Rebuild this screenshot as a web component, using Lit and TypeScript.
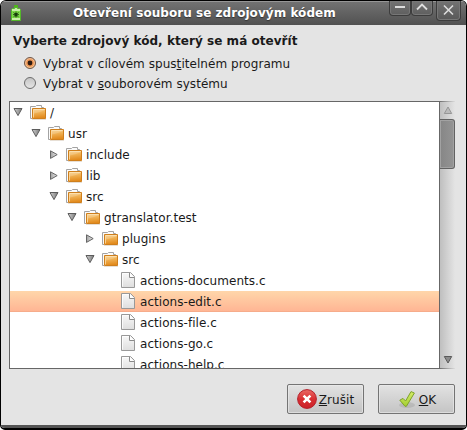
import { LitElement, html, css, svg, nothing } from "lit";
import { customElement, property, state } from "lit/decorators.js";
import { classMap } from "lit/directives/class-map.js";
import { styleMap } from "lit/directives/style-map.js";

type Kind = "open" | "closed" | "file";
interface Row {
  name: string;
  level: number;
  kind: Kind;
}

const ROWS: Row[] = [
  { name: "/", level: 0, kind: "open" },
  { name: "usr", level: 1, kind: "open" },
  { name: "include", level: 2, kind: "closed" },
  { name: "lib", level: 2, kind: "closed" },
  { name: "src", level: 2, kind: "open" },
  { name: "gtranslator.test", level: 3, kind: "open" },
  { name: "plugins", level: 4, kind: "closed" },
  { name: "src", level: 4, kind: "open" },
  { name: "actions-documents.c", level: 5, kind: "file" },
  { name: "actions-edit.c", level: 5, kind: "file" },
  { name: "actions-file.c", level: 5, kind: "file" },
  { name: "actions-go.c", level: 5, kind: "file" },
  { name: "actions-help.c", level: 5, kind: "file" },
];

const arrowDown = html`<svg width="12" height="12" viewBox="0 0 12 12">
  <defs><linearGradient id="d" x1="0" x2="1"><stop offset="0" stop-color="#d2d2d2" /><stop offset="1" stop-color="#777" /></linearGradient></defs>
  <path d="M2 2.5H10L6 9.6Z" fill="url(#d)" stroke="#5c5c5c" />
</svg>`;

const arrowRight = html`<svg width="12" height="12" viewBox="0 0 12 12">
  <defs><linearGradient id="r" x1="0" x2="1"><stop offset="0" stop-color="#a2a2a2" /><stop offset="1" stop-color="#eee" /></linearGradient></defs>
  <path d="M2.5 1.8V9.4L9.2 5.6Z" fill="url(#r)" stroke="#666" />
</svg>`;

const folderIcon = html`<svg width="16" height="16" viewBox="0 0 16 16">
  <defs><linearGradient id="f" x1="0" y1="0" x2="0.15" y2="1"><stop offset="0" stop-color="#f9cf86" /><stop offset="0.45" stop-color="#f0b255" /><stop offset="1" stop-color="#e28a1c" /></linearGradient></defs>
  <path d="M0.5 13.5V1.5H5.5L6.5 0.5H11.5V2.5H13.5V5" fill="#fbfbfb" stroke="#a3a3a3" />
  <path d="M0.5 13.5H2" stroke="#a3a3a3" />
  <path d="M2.5 3.5H15.5V13.5H2.5Z" fill="url(#f)" stroke="#cf7f1c" />
  <path d="M3.5 12.5V4.5H14.5" fill="none" stroke="#fbdca4" stroke-opacity="0.85" />
  <path d="M4 8.4Q9 8 15 5V4H4Z" fill="#fff" fill-opacity="0.18" />
  <path d="M2 14.5H16" stroke="#b9a488" stroke-opacity="0.35" />
</svg>`;

const fileIcon = html`<svg width="16" height="16" viewBox="0 0 16 16">
  <defs><linearGradient id="p" x1="0" y1="0" x2="0" y2="1"><stop offset="0" stop-color="#f8f8f8" /><stop offset="1" stop-color="#dedede" /></linearGradient></defs>
  <path d="M1.5 0.5H10.5L14.5 4.5V15.5H1.5Z" fill="url(#p)" stroke="#999" />
  <path d="M2.5 14.5V1.5H9" fill="none" stroke="#fff" stroke-opacity="0.8" />
  <path d="M9.5 1V5.5H14" fill="#fff" stroke="#8a8a8a" />
</svg>`;

@customElement("radio-option")
class RadioOption extends LitElement {
  static styles = css`
    :host { display: flex; align-items: center; height: 20px; gap: 7px; }
    svg { display: block; flex: none; }
    .text { line-height: 18px; padding-top: 2px; }
  `;
  @property({ type: Boolean }) checked = false;
  render() {
    return html`<svg width="12" height="12" viewBox="0 0 12 12">
        <defs>
          <linearGradient id="g" x1="0" y1="0" x2="0" y2="1">
            <stop offset="0" stop-color=${this.checked ? "#f7b889" : "#c4c4c4"} />
            <stop offset="1" stop-color=${this.checked ? "#fbc48c" : "#e6e6e6"} />
          </linearGradient>
        </defs>
        <circle cx="6" cy="6" r="5.5" fill="url(#g)" stroke=${this.checked ? "#6b5548" : "#6c6c6c"} />
        ${this.checked
          ? svg`<circle cx="6" cy="6" r="3.8" fill="#e99353"/><circle cx="6" cy="6" r="2.4" fill="#2e1a10"/>`
          : nothing}
      </svg>
      <span class="text"><slot></slot></span>`;
  }
}

@customElement("tree-row")
class TreeRow extends LitElement {
  static styles = css`
    :host { display: block; }
    .row { display: flex; align-items: flex-start; height: 21px; white-space: nowrap; }
    .selected { background: linear-gradient(#ffd6aa, #ffb493); box-shadow: inset 0 -1px #f6ac8b; }
    .arrow { width: 12px; height: 12px; margin: 4px 6px 0 2px; flex: none; }
    .closed .arrow { margin-top: 5px; }
    .icon { width: 16px; height: 16px; margin: 3px 4px 0 0; flex: none; }
    .file .icon { margin-top: 2px; }
    svg { display: block; }
    .label { line-height: 22px; height: 21px; }
  `;
  @property({ attribute: false }) row!: Row;
  @property({ type: Boolean }) selected = false;
  render() {
    const { name, level, kind } = this.row;
    return html`<div
      class=${classMap({ row: true, [kind]: true, selected: this.selected })}
      style=${styleMap({ paddingLeft: `${level * 18}px` })}
    >
      <span class="arrow">${kind === "open" ? arrowDown : kind === "closed" ? arrowRight : nothing}</span>
      <span class="icon">${kind === "file" ? fileIcon : folderIcon}</span>
      <span class="label">${name}</span>
    </div>`;
  }
}

@customElement("app-root")
class AppRoot extends LitElement {
  static styles = css`
    :host { display: block; width: 467px; height: 430px; background: #fff; font: 12px "DejaVu Sans", sans-serif; letter-spacing: 0.045px; color: #1a1a1a; }
    * { box-sizing: border-box; }
    svg { display: block; }
    .window { display: flex; flex-direction: column; width: 467px; height: 430px; border: 1px solid #000; border-bottom-width: 2px; border-radius: 6px 6px 5px 5px; background: #e4e4e4; overflow: hidden; }
    .title { display: flex; height: 24px; flex: none; background: linear-gradient(#737373, #515151); box-shadow: inset 0 1px #969696; color: #fff; }
    .app { width: 30px; padding: 4px 0 0 10px; }
    .caption { flex: 1; padding-left: 42px; font-weight: bold; line-height: 24px; white-space: nowrap; text-shadow: 0 1px 1px #333; }
    .controls { display: flex; margin-right: 5px; }
    .control { width: 22px; height: 15px; border: 1px solid #3c3c3c; border-top: 0; border-radius: 0 0 4px 4px; box-shadow: inset 0 0 0 1px #777; }
    .close { width: 25px; height: 20px; margin-left: 3px; }
    .body { flex: 1; display: flex; flex-direction: column; padding: 7px 11px 0 8px; }
    .heading { font-weight: bold; line-height: 18px; height: 21px; padding-left: 4px; white-space: nowrap; }
    .options { padding-left: 15px; height: 48px; white-space: nowrap; }
    .pane { display: flex; height: 268px; flex: none; }
    .tree { width: 431px; border: 1px solid #676767; background: #fff; overflow: hidden; }
    .scroll { width: 15px; display: flex; flex-direction: column; justify-content: space-between; background: linear-gradient(90deg, #bfbfbf, #e4e4e4); border: solid #aaa; border-width: 1px 0; border-image: linear-gradient(90deg, #676767, #e4e4e4) 1; }
    .step { height: 17px; padding: 4px 0 0 2px; }
    .thumb { height: 50px; border: 1px solid #626262; border-left: 0; border-radius: 0 3px 3px 0; background: linear-gradient(90deg, #868686, #949494); box-shadow: inset 0 0 0 1px #a2a2a2; }
    .track { flex: 1; }
    .actions { display: flex; justify-content: flex-end; gap: 14px; margin-top: 15px; }
    .button { display: flex; align-items: center; justify-content: center; gap: 2px; width: 77px; height: 30px; border: 1px solid #747474; border-radius: 2px; background: linear-gradient(#e2e2e2, #c4c4c4); box-shadow: inset 0 0 0 1px #ececec99; }
    .button span { line-height: 18px; padding-top: 2px; }
    .frame { height: 3px; flex: none; background: #545454; }
    u { text-decoration: underline 1px; text-underline-offset: 1px; text-decoration-skip-ink: none; }
  `;
  @state() private selectedIndex = 9;
  render() {
    return html`<div class="window">
      <div class="title">
        <div class="app">
          <svg width="10" height="17" viewBox="0 0 10 17">
            <rect x="3" y="0" width="4" height="2" rx="0.6" fill="#4cba16" />
            <path d="M3.5 2.5H6.5V3.5H8.5L9.5 4.5V15.5H0.5V4.5L1.5 3.5H3.5Z" fill="#c8f0a8" stroke="#55b82a" />
            <rect x="1" y="6" width="8" height="7" fill="#7ddb48" />
            <path d="M5 6.5V12.5M2.5 7.5L7.5 11.8M7.5 7.5L2.5 11.8M2 9.6H8" stroke="#1f4a10" stroke-width="0.9" />
            <rect x="3.9" y="8" width="2.2" height="3.4" fill="#173d0c" />
          </svg>
        </div>
        <div class="caption">Otevření souboru se zdrojovým kódem</div>
        <div class="controls">
          <div class="control"><svg width="20" height="14" viewBox="0 0 20 14"><path d="M5 6H15" stroke="#ddd" stroke-width="2" /></svg></div>
          <div class="control"><svg width="20" height="14" viewBox="0 0 20 14"><path d="M5 8.5L10 3.5L15 8.5" fill="none" stroke="#ddd" stroke-width="1.8" /></svg></div>
          <div class="control close"><svg width="23" height="19" viewBox="0 0 23 19"><path d="M7 4.5L16 13.5M16 4.5L7 13.5" stroke="#ddd" stroke-width="1.6" /></svg></div>
        </div>
      </div>
      <div class="body">
        <div class="heading">Vyberte zdrojový kód, který se má otevřít</div>
        <div class="options">
          <radio-option checked>Vybrat v cílovém spus<u>t</u>itelném programu</radio-option>
          <radio-option>Vybrat v <u>s</u>ouborovém systému</radio-option>
        </div>
        <div class="pane">
          <div class="tree">
            ${ROWS.map((row, i) => html`<tree-row .row=${row} ?selected=${i === this.selectedIndex} @click=${() => (this.selectedIndex = i)}></tree-row>`)}
          </div>
          <div class="scroll">
            <div class="step"><svg width="12" height="10" viewBox="0 0 12 10"><path d="M2.3 7.5H9.7L6 1Z" fill="#bbb" stroke="#969696" /></svg></div>
            <div class="thumb"></div>
            <div class="track"></div>
            <div class="step"><svg width="12" height="10" viewBox="0 0 12 10"><path d="M2.3 1.5H9.7L6 8Z" fill="#8b8b8b" stroke="#595959" /></svg></div>
          </div>
        </div>
        <div class="actions">
          <div class="button">
            <svg width="20" height="20" viewBox="0 0 20 20">
              <defs><linearGradient id="c" x1="0" y1="0" x2="0" y2="1"><stop offset="0" stop-color="#ea6a66" /><stop offset="0.5" stop-color="#d92f32" /><stop offset="1" stop-color="#cb2229" /></linearGradient></defs>
              <circle cx="10" cy="10" r="9.4" fill="url(#c)" stroke="#b3202a" />
              <path d="M6.6 6.6L13.4 13.4M13.4 6.6L6.6 13.4" stroke="#fff" stroke-width="2.6" />
            </svg>
            <span><u>Z</u>rušit</span>
          </div>
          <div class="button">
            <svg width="20" height="20" viewBox="0 0 20 20">
              <defs><linearGradient id="k" x1="0" y1="0" x2="0" y2="1"><stop offset="0" stop-color="#d5ec6c" /><stop offset="1" stop-color="#a4cf30" /></linearGradient></defs>
              <ellipse cx="10" cy="16" rx="8" ry="3" fill="#000" fill-opacity="0.09" />
              <path d="M2.8 11.2L6 9.4L8.6 12L14 2.6L17.4 4L9.4 17.3H8Z" fill="url(#k)" stroke="#7fa32b" stroke-linejoin="round" />
            </svg>
            <span><u>O</u>K</span>
          </div>
        </div>
      </div>
      <div class="frame"></div>
    </div>`;
  }
}
